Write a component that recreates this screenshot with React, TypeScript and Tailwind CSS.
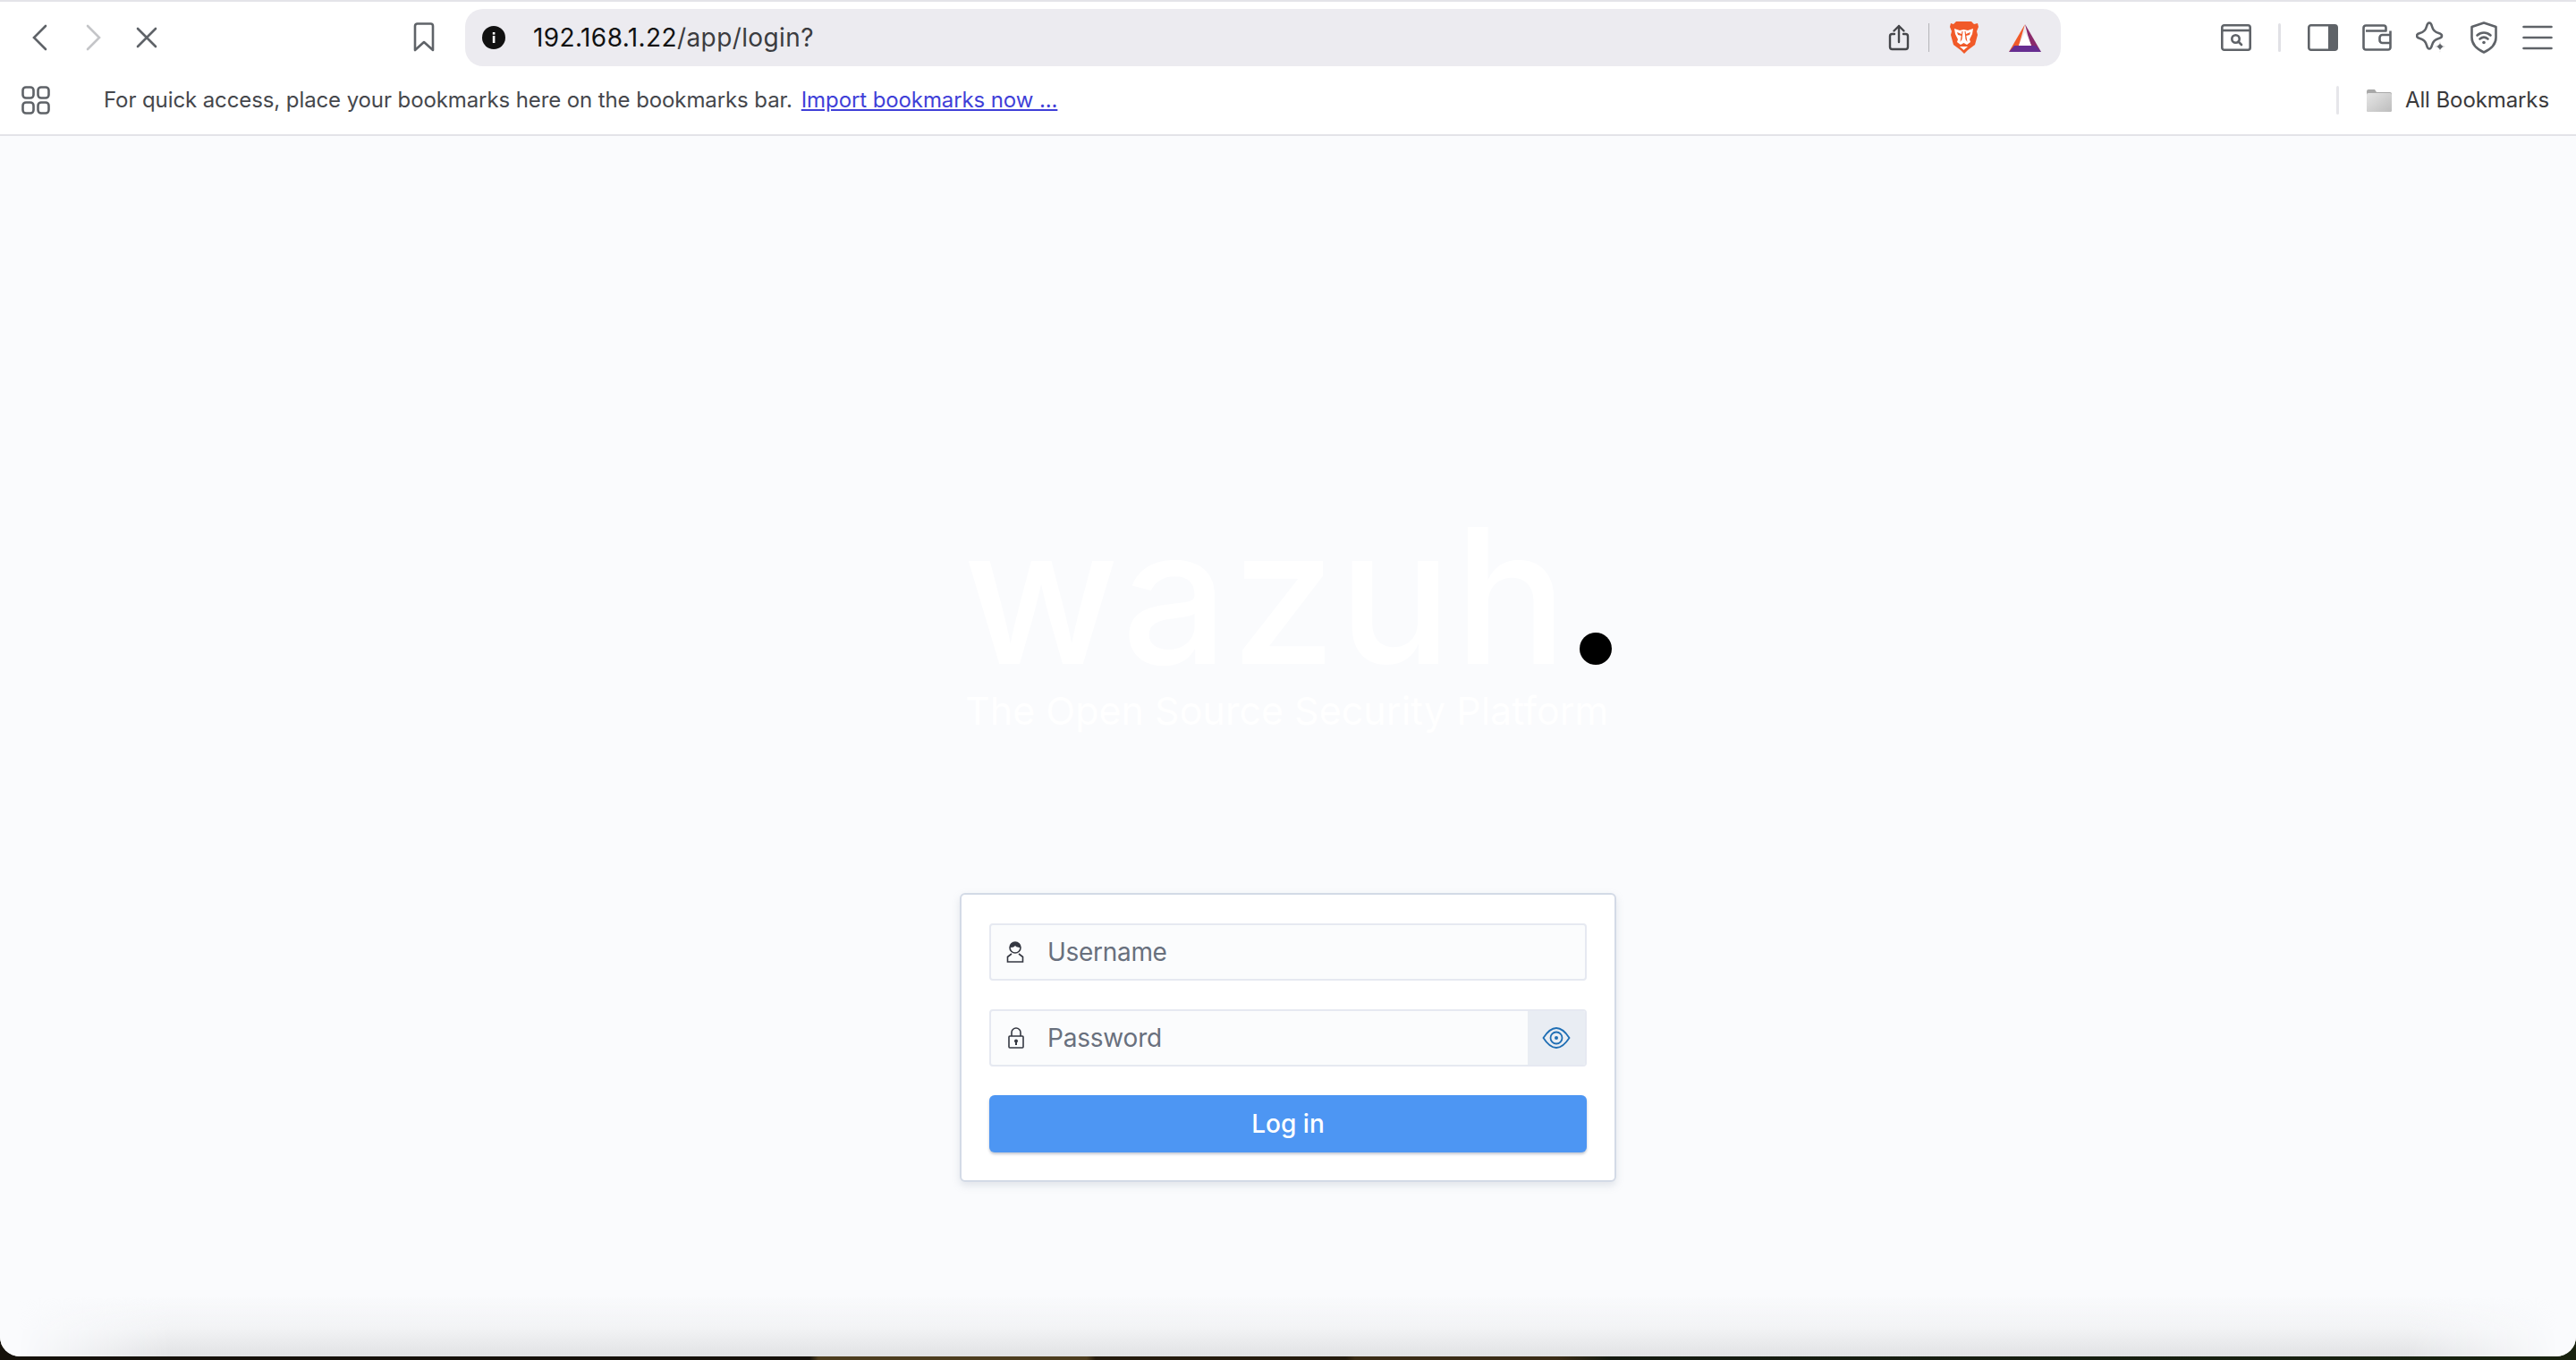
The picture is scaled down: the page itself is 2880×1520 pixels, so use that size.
const iconClass = "fill-none stroke-[#5f6368] stroke-[2.6]";

function Lion() {
  return (
    <svg width="33" height="36" viewBox="0 0 33 36">
      <path d="M8 0h17l3 3 4-1 1 4-2 5 1 4-3 11-8 6-4 4-4-4-8-6L2 15l1-4-2-5 1-4 3 1z" fill="#f15a29" />
      <path d="M6 8l6 2 4.500-1 4.500 1 6-2-1 6-3 6 1 3-4 3-3.500-2-3.500 2-4-3 1-3-3-6z" fill="#fff" />
      <path d="M9 12l5 2v2l-4-1zM24 12l-5 2v2l4-1zM14.500 11h1l-1 9-2 3zM18.500 11h-1l1 9 2 3z" fill="#f15a29" />
      <path d="M12 28h9l-4.500 4z" fill="#fff" />
    </svg>
  );
}

function Bat() {
  return (
    <svg width="36" height="31" viewBox="0 0 36 31">
      <path d="M18 0L0 31l11-7z" fill="#f15a29" />
      <path d="M18 0l18 31-11-7-4-12z" fill="#8a2a6b" />
      <path d="M0 31h36l-6-7H6z" fill="#662d91" />
      <path d="M18 9l7 15H11z" fill="#fff" />
    </svg>
  );
}

function Toolbar() {
  return (
    <div className="flex h-[78px] items-center pt-[2px]">
      <svg className="ml-[35px]" width="18" height="30" viewBox="0 0 18 30">
        <path d="M16 2L3 15l13 13" className={iconClass} strokeLinecap="round" />
      </svg>
      <svg className="ml-[43px]" width="18" height="30" viewBox="0 0 18 30">
        <path d="M2 2l13 13L2 28" className="fill-none stroke-[#c4c5c8] stroke-[2.6]" strokeLinecap="round" />
      </svg>
      <svg className="ml-[38px]" width="24" height="24" viewBox="0 0 24 24">
        <path d="M2 2l20 20M22 2L2 22" className={iconClass} strokeLinecap="round" />
      </svg>
      <svg className="ml-[286px]" width="24" height="34" viewBox="0 0 24 34">
        <path d="M2 4a2.500 2.500 0 012.500-2.500h15A2.500 2.500 0 0122 4v27l-10-9-10 9z" className={iconClass} strokeLinejoin="round" />
      </svg>
      <div className="ml-[34px] flex h-[64px] w-[1784px] items-center rounded-[20px] bg-[#ecebf0] pl-[19px]">
        <svg width="26" height="26" viewBox="0 0 26 26">
          <circle cx="13" cy="13" r="13" fill="#111" />
          <rect x="11.800" y="11" width="2.600" height="8" fill="#fff" />
          <rect x="11.800" y="7" width="2.600" height="2.600" fill="#fff" />
        </svg>
        <span className="ml-[31px] text-[28px] leading-none tracking-[0.4px] text-[#111]">192.168.1.22<span className="text-[#3b3c40]">/app/login?</span></span>
        <svg className="ml-auto" width="24" height="30" viewBox="0 0 24 30">
          <path d="M7 11H4.500A2.500 2.500 0 002 13.500v12A2.500 2.500 0 004.500 28h15a2.500 2.500 0 002.500-2.500v-12a2.500 2.500 0 00-2.500-2.500H17M12 20V2M6.500 7.500L12 2l5.500 5.500" className="fill-none stroke-[#45464a] stroke-[2.4]" strokeLinecap="round" strokeLinejoin="round" />
        </svg>
        <div className="ml-[21px] h-[32px] w-[1px] bg-[#b4b4b8]" />
        <div className="ml-[22px]"><Lion /></div>
        <div className="mr-[22px] ml-[34px]"><Bat /></div>
      </div>
      <svg className="ml-[179px]" width="34" height="30" viewBox="0 0 34 30">
        <rect x="1.300" y="1.300" width="31.400" height="27.400" rx="2.500" className={iconClass} />
        <path d="M1.300 7h31.400" className={iconClass} />
        <circle cx="16.500" cy="16.500" r="4.200" className={iconClass} />
        <path d="M19.500 19.500l3.500 3.500" className={iconClass} strokeLinecap="round" />
      </svg>
      <div className="ml-[30px] h-[32px] w-[3px] rounded-sm bg-[#e1e1e6]" />
      <svg className="ml-[30px]" width="34" height="30" viewBox="0 0 34 30">
        <rect x="1.300" y="1.300" width="31.400" height="27.400" rx="2.500" className={iconClass} />
        <path d="M23 1.300h7.200a2.500 2.500 0 012.500 2.500v22.400a2.500 2.500 0 01-2.500 2.500H23z" fill="#5f6368" />
      </svg>
      <svg className="ml-[27px]" width="33" height="30" viewBox="0 0 33 30">
        <path d="M31.500 7.500V26a2.500 2.500 0 01-2.500 2.500H4A2.500 2.500 0 011.500 26V4A2.500 2.500 0 014 1.500h20A2.500 2.500 0 0126.500 4v3.500H4M31.500 12h-9a3 3 0 00-3 3v3a3 3 0 003 3h9" className={iconClass} strokeLinejoin="round" />
      </svg>
      <svg className="ml-[27px]" width="34" height="36" viewBox="0 0 34 36">
        <path d="M15 1.500C17 1.500 17.500 3.500 18 5.500C19 9.500 21.500 12 25.500 13C27.500 13.500 29 14 29 16C29 18 27.500 18.500 25.500 19C21.500 20 19 22.500 18 26.500C17.500 28.500 17 30.500 15 30.500C13 30.500 12.500 28.500 12 26.500C11 22.500 8.500 20 4.500 19C2.500 18.500 1 18 1 16C1 14 2.500 13.500 4.500 13C8.500 12 11 9.500 12 5.500C12.500 3.500 13 1.500 15 1.500Z" className={iconClass} strokeLinejoin="round" />
        <path d="M27 22c.7 4 1.700 5 6 6-4.300 1-5.300 2-6 7-.7-5-1.700-6-6-7 4.300-1 5.300-2 6-6z" fill="#5f6368" stroke="#fff" strokeWidth="1" />
      </svg>
      <svg className="ml-[27px]" width="30" height="36" viewBox="0 0 30 36">
        <path d="M15 1.500L28.500 6v12c0 8-6 13-13.500 16.500C7.500 31 1.500 26 1.500 18V6z" className={iconClass} strokeLinejoin="round" />
        <path d="M7.500 15.500c4.500-4 10.500-4 15 0M10.500 19.500c2.800-2.300 6.200-2.300 9 0" className={iconClass} strokeLinecap="round" />
        <circle cx="15" cy="23.500" r="1.800" fill="#5f6368" />
      </svg>
      <svg className="ml-[28px]" width="34" height="28" viewBox="0 0 34 28">
        <path d="M1.500 2h31M1.500 14h31M1.500 26h31" className={iconClass} strokeLinecap="round" />
      </svg>
    </div>
  );
}

function BookmarksBar() {
  return (
    <div className="flex h-[72px] items-center border-b-2 border-[#e3e3e8] pb-[6px] text-[24px] leading-none tracking-[-0.1px]">
      <svg className="ml-[24px]" width="32" height="32" viewBox="0 0 32 32">
        {[[1.500, 1.500], [18.500, 1.500], [1.500, 18.500], [18.500, 18.500]].map(([x, y]) => (
          <rect key={`${x}-${y}`} x={x} y={y} width="12" height="12" rx="3.500" className={iconClass} />
        ))}
      </svg>
      <span className="ml-[60px] text-[#45474c]">For quick access, place your bookmarks here on the bookmarks bar.</span>
      <span className="ml-[10px] text-[#3f3fd8] underline">Import bookmarks now ...</span>
      <div className="ml-auto h-[32px] w-[3px] rounded-sm bg-[#e6e6ea]" />
      <svg className="ml-[30px]" width="30" height="26" viewBox="0 0 30 26">
        <defs>
          <linearGradient id="folder" x1="0" y1="0" x2="1" y2="1">
            <stop offset="0" stopColor="#e6e6e6" />
            <stop offset="1" stopColor="#bdbdbd" />
          </linearGradient>
        </defs>
        <path d="M1 3a2 2 0 012-2h7l2 3h15a2 2 0 012 2v18a2 2 0 01-2 2H3a2 2 0 01-2-2z" fill="#a9a9a9" />
        <rect x="1" y="5" width="28" height="21" rx="2" fill="url(#folder)" />
      </svg>
      <span className="mr-[30px] ml-[14px] text-[#3a3a3c]">All Bookmarks</span>
    </div>
  );
}

function LoginCard() {
  return (
    <div className="flex h-[323px] w-[734px] flex-col rounded-[6px] border-2 border-[#d3dae6] bg-white px-[31px] pt-[32px] shadow-[0_4px_8px_rgba(152,162,179,0.25)]">
      <div className="flex h-[64px] items-center rounded-[4px] border-2 border-[#e6e9f1] bg-[#fbfcfd] text-[28px] tracking-[-0.3px] text-[#69707d]">
        <svg className="ml-[17px]" width="20" height="24" viewBox="0 0 20 24">
          <circle cx="10" cy="7" r="6" className="fill-none stroke-[#343741] stroke-[1.600]" />
          <path d="M4 7a6 6 0 0112 0c-4 0-5-1-6-2-1 1-2 2-6 2z" fill="#343741" />
          <path d="M6 14l-4.500 3.500V23h17v-5.500L14 14" className="fill-none stroke-[#343741] stroke-[1.600]" />
        </svg>
        <span className="ml-[26px]">Username</span>
      </div>
      <div className="mt-[32px] flex h-[64px] items-center overflow-hidden rounded-[4px] border-2 border-[#e6e9f1] bg-[#fbfcfd] text-[28px] tracking-[-0.2px] text-[#69707d]">
        <svg className="ml-[19px]" width="18" height="24" viewBox="0 0 18 24">
          <path d="M4 10V6a5 5 0 0110 0v4" className="fill-none stroke-[#343741] stroke-[1.600]" />
          <rect x="1" y="10" width="16" height="13" rx="1" className="fill-none stroke-[#343741] stroke-[1.600]" />
          <circle cx="9" cy="15.500" r="2" fill="#343741" />
          <rect x="8" y="16" width="2" height="4" fill="#343741" />
        </svg>
        <span className="ml-[26px]">Password</span>
        <div className="ml-auto flex h-full w-[64px] items-center justify-center bg-[#e9edf3]">
          <svg width="32" height="24" viewBox="0 0 32 24">
            <path d="M1.500 12C6 5 10.500 1 16 1s10 4 14.500 11C26 19 21.500 23 16 23S6 19 1.500 12z" className="fill-none stroke-[#1f6eb4] stroke-[1.800]" />
            <circle cx="16" cy="12" r="6.500" className="fill-none stroke-[#1f6eb4] stroke-[1.800]" />
            <circle cx="16" cy="12" r="2" fill="#1f6eb4" />
          </svg>
        </div>
      </div>
      <button className="mt-[32px] h-[64px] rounded-[6px] bg-[#4d96f3] text-[28px] font-medium text-white shadow-[0_2px_3px_rgba(120,130,150,0.45)]">
        Log in
      </button>
    </div>
  );
}

export default function App() {
  return (
    <div className="relative flex h-[1520px] w-[2880px] flex-col overflow-hidden bg-[linear-gradient(to_right,#15110a_0,#15110a_905px,#4d3d1e_915px,#4d3d1e_1215px,#241b0d_1225px,#241b0d_1505px,#3a2c15_1515px,#3a2c15_1740px,#141a10_1800px,#18220f_2880px)] font-['Inter',sans-serif]">
      <div className="flex h-[1516px] flex-col overflow-hidden rounded-b-[22px] bg-white">
        <div className="h-[2px] bg-[#e4e4e9]" />
        <Toolbar />
        <BookmarksBar />
        <main className="relative flex flex-1 flex-col items-center bg-[#fafbfd] pt-[419px]">
          <div className="flex w-[734px] flex-col items-start text-white">
            <div className="ml-[4px] flex h-[190px] items-end">
              <span className="text-[210px] leading-[190px] font-medium tracking-[3px]">wazuh</span>
              <div className="mb-[18px] ml-[11px] size-[36px] rounded-full bg-black" />
            </div>
            <span className="mt-[12px] ml-[6px] text-[43px] leading-none whitespace-nowrap">The Open Source Security Platform</span>
          </div>
          <div className="mt-[182px]">
            <LoginCard />
          </div>
          {/* shadow from the dock along the bottom edge */}
          <div className="absolute inset-x-0 bottom-0 h-[66px] bg-[linear-gradient(to_top,#e2e3e5,#f1f2f4_45%,transparent)] [mask-image:linear-gradient(to_right,transparent_20px,black_190px,black_2690px,transparent_2860px)]" />
        </main>
      </div>
    </div>
  );
}
